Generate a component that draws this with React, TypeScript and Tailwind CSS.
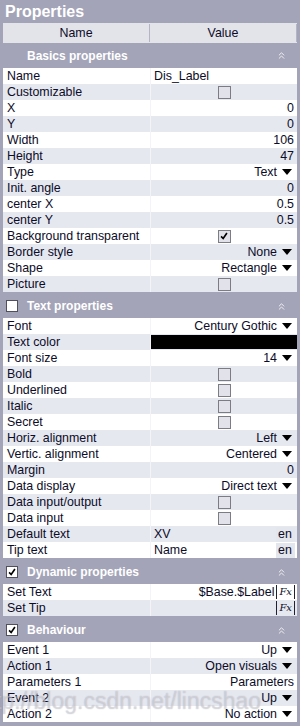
import { ChevronsUp } from "lucide-react";

type Val =
  | { k: "text"; v: string }
  | { k: "num"; v: string }
  | { k: "drop"; v: string }
  | { k: "check"; on?: boolean }
  | { k: "color" }
  | { k: "lang"; v: string }
  | { k: "fx"; v: string };

type Section = {
  title: string;
  box?: boolean;
  checked?: boolean;
  rows: [string, Val][];
};

const sections: Section[] = [
  {
    title: "Basics properties",
    rows: [
      ["Name", { k: "text", v: "Dis_Label" }],
      ["Customizable", { k: "check" }],
      ["X", { k: "num", v: "0" }],
      ["Y", { k: "num", v: "0" }],
      ["Width", { k: "num", v: "106" }],
      ["Height", { k: "num", v: "47" }],
      ["Type", { k: "drop", v: "Text" }],
      ["Init. angle", { k: "num", v: "0" }],
      ["center X", { k: "num", v: "0.5" }],
      ["center Y", { k: "num", v: "0.5" }],
      ["Background transparent", { k: "check", on: true }],
      ["Border style", { k: "drop", v: "None" }],
      ["Shape", { k: "drop", v: "Rectangle" }],
      ["Picture", { k: "check" }],
    ],
  },
  {
    title: "Text properties",
    box: true,
    rows: [
      ["Font", { k: "drop", v: "Century Gothic" }],
      ["Text color", { k: "color" }],
      ["Font size", { k: "drop", v: "14" }],
      ["Bold", { k: "check" }],
      ["Underlined", { k: "check" }],
      ["Italic", { k: "check" }],
      ["Secret", { k: "check" }],
      ["Horiz. alignment", { k: "drop", v: "Left" }],
      ["Vertic. alignment", { k: "drop", v: "Centered" }],
      ["Margin", { k: "num", v: "0" }],
      ["Data display", { k: "drop", v: "Direct text" }],
      ["Data input/output", { k: "check" }],
      ["Data input", { k: "check" }],
      ["Default text", { k: "lang", v: "XV" }],
      ["Tip text", { k: "lang", v: "Name" }],
    ],
  },
  {
    title: "Dynamic properties",
    box: true,
    checked: true,
    rows: [
      ["Set Text", { k: "fx", v: "$Base.$Label" }],
      ["Set Tip", { k: "fx", v: "" }],
    ],
  },
  {
    title: "Behaviour",
    box: true,
    checked: true,
    rows: [
      ["Event 1", { k: "drop", v: "Up" }],
      ["Action 1", { k: "drop", v: "Open visuals" }],
      ["Parameters 1", { k: "num", v: "Parameters" }],
      ["Event 2", { k: "drop", v: "Up" }],
      ["Action 2", { k: "drop", v: "No action" }],
    ],
  },
];

function Tick({ className }: { className?: string }) {
  return (
    <svg viewBox="0 0 12 12" className={className}>
      <path d="M2.5 6.5 L5 9 L9.5 2.5" fill="none" stroke="#000" strokeWidth="2" />
    </svg>
  );
}

function Arrow() {
  return (
    <svg width="10" height="6" viewBox="0 0 10 6" className="ml-[5px] mr-[5px]">
      <polygon points="0,0 10,0 5,6" fill="#000" />
    </svg>
  );
}

function Value({ val }: { val: Val }) {
  switch (val.k) {
    case "text":
      return <div className="pl-[3px]">{val.v}</div>;
    case "num":
      return <div className="flex-1 pr-[3px] text-right">{val.v}</div>;
    case "drop":
      return (
        <div className="flex flex-1 items-center justify-end">
          <span>{val.v}</span>
          <Arrow />
        </div>
      );
    case "check":
      return (
        <div className="flex flex-1 justify-center">
          <div className="flex h-[13px] w-[13px] items-center justify-center border border-[#7c7c84] bg-[#e2e2ea]">
            {val.on && <Tick className="h-[10px] w-[10px]" />}
          </div>
        </div>
      );
    case "color":
      return <div className="h-[14px] flex-1 bg-black" />;
    case "lang":
      return (
        <div className="flex flex-1 items-center justify-between">
          <span className="pl-[3px]">{val.v}</span>
          <span className="mr-[2px] h-[15px] w-[19px] bg-[#e4e6ee] pl-[2px] leading-[15px]">en</span>
        </div>
      );
    case "fx":
      return (
        <div className="flex flex-1 items-center justify-end pr-[2px]">
          <span>{val.v}</span>
          <span className="ml-[2px] flex items-center">
            <span className="h-[14px] w-px bg-[#202030]" />
            <span className="px-[2px] font-['DejaVu_Serif',serif] text-[10px] italic">Fx</span>
            <span className="h-[14px] w-px bg-[#202030]" />
          </span>
        </div>
      );
  }
}

export default function App() {
  return (
    <div className="relative h-[726px] w-[300px] overflow-hidden bg-[#a4a4b8] font-['Liberation_Sans',Arial,sans-serif] text-[12.4px] text-[#0c0c28]">
      <div className="flex h-[23px] items-center pl-[5px] text-[16px] font-bold text-white">Properties</div>

      <div className="mx-[3px] flex h-[20px] items-center bg-[#e3e3ea]">
        <div className="w-[147px] border-r border-[#b4b4c4] text-center">Name</div>
        <div className="flex-1 text-center">Value</div>
        <div className="h-[18px] w-px bg-[#b4b4c4]" />
      </div>

      {sections.map((s, si) => (
        <div key={s.title}>
          <div className={`flex ${si === 0 ? "h-[25px]" : "h-[26px] pt-[2px]"} items-center pl-[6px] pr-[13px]`}>
            <div className="flex w-[12px] justify-center">
              {s.box && (
                <div className="flex h-[12px] w-[12px] items-center justify-center border border-[#50505c] bg-white">
                  {s.checked && <Tick className="h-[10px] w-[10px]" />}
                </div>
              )}
            </div>
            <div className="ml-[9px] flex-1 text-[12px] font-bold text-white">{s.title}</div>
            <ChevronsUp size={11} color="#ffffff" strokeWidth={1.75} />
          </div>
          <div className="mx-[3px]">
            {s.rows.map(([label, val], ri) => {
              const bg = ri % 2 === 0 ? "bg-white" : "bg-[#e6e8f0]";
              return (
                <div key={label} className={`flex h-[16px] items-center leading-[16px] ${bg}`}>
                  <div className="w-[147px] whitespace-nowrap pl-[4px]">{label}</div>
                  <div className="flex h-[16px] flex-1 items-center border-l border-[#f4f4f8]">
                    <Value val={val} />
                  </div>
                </div>
              );
            })}
          </div>
        </div>
      ))}

      {/* watermark */}
      <div className="pointer-events-none absolute left-[-24px] top-[688px] whitespace-nowrap text-[23px] leading-[26px] text-white/40 [text-shadow:0_0_1px_rgba(90,90,110,0.45)]">
        http://blog.csdn.net/lincshao
      </div>
    </div>
  );
}
